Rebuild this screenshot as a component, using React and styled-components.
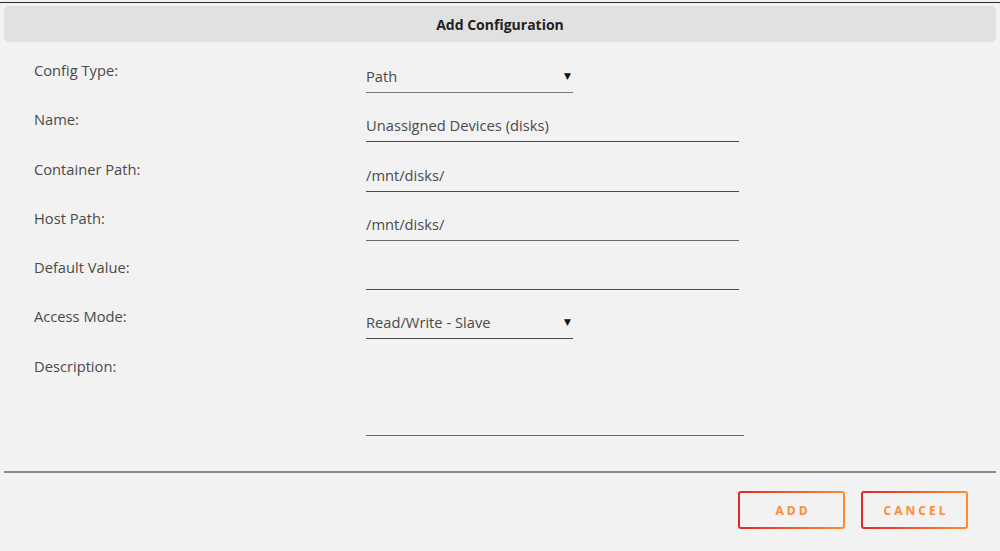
import React from "react";
import styled, { createGlobalStyle } from "styled-components";

const Global = createGlobalStyle`
  html, body { margin: 0; padding: 0; background: #f2f2f2; }
  body { font-family: "Open Sans", "Noto Sans", sans-serif; }
`;

const Dialog = styled.div`
  margin-top: 2px;
  border-top: 1px solid #2b2b2b;
  height: 548px;
  box-sizing: border-box;
  padding: 3px 4px 0 4px;
  display: flex;
  flex-direction: column;
`;

const Header = styled.div`
  height: 36px;
  padding-top: 1px;
  box-sizing: border-box;
  background: #e1e1e1;
  border-radius: 5px;
  display: flex;
  align-items: center;
  justify-content: center;
  font-size: 14px;
  font-weight: 700;
  color: #222;
`;

const Form = styled.div`
  padding: 10px 0 0 30px;
  display: flex;
  flex-direction: column;
`;

const Row = styled.div`
  display: grid;
  grid-template-columns: 332px 1fr;
  height: ${(p) => p.$h || 49.25}px;
  flex: none;
`;

const Label = styled.div`
  padding-top: 9px;
  font-size: 14.7px;
  line-height: 18px;
  color: #4a4a4a;
`;

const Field = styled.div`
  margin-top: 14px;
  width: ${(p) => p.$w}px;
  height: ${(p) => (p.$tall ? 74.5 : 27)}px;
  box-sizing: border-box;
  padding-top: 1px;
  border-bottom: 1px solid ${(p) => p.$line || "#4a4a4a"};
  font-size: 14.7px;
  line-height: 18px;
  color: #4a4a4a;
  display: flex;
  justify-content: space-between;
  align-items: flex-start;
`;

const Arrow = styled.span`
  font-family: "DejaVu Sans", sans-serif;
  font-size: 9px;
  line-height: 18px;
  color: #111;
  margin-right: 2px;
`;

const Divider = styled.div`
  margin-top: 32px;
  height: 2px;
  background: #8a8a8a;
`;

const Footer = styled.div`
  display: flex;
  justify-content: flex-end;
  gap: 16px;
  padding: 18px 28px 0 0;
`;

const Button = styled.button`
  width: 107px;
  height: 38px;
  box-sizing: border-box;
  border: 2px solid transparent;
  border-radius: 3px;
  background: linear-gradient(#f2f2f2, #f2f2f2) padding-box,
    linear-gradient(90deg, #e22828, #ff8c2f) border-box;
  font-family: "Open Sans", "Noto Sans", sans-serif;
  font-size: 12px;
  font-weight: 700;
  letter-spacing: 3px;
  padding: 1px 0 0 3px;
  color: #fb8c3c;
`;

const rows = [
  { label: "Config Type:", value: "Path", w: 207, select: true, line: "#7a7a7a" },
  { label: "Name:", value: "Unassigned Devices (disks)", w: 373 },
  { label: "Container Path:", value: "/mnt/disks/", w: 373 },
  { label: "Host Path:", value: "/mnt/disks/", w: 373, line: "#6a6a6a" },
  { label: "Default Value:", value: "", w: 373 },
  { label: "Access Mode:", value: "Read/Write - Slave", w: 207, select: true },
];

export default function App() {
  return (
    <>
      <Global />
      <Dialog>
        <Header>Add Configuration</Header>
        <Form>
          {rows.map((r) => (
            <Row key={r.label}>
              <Label>{r.label}</Label>
              <Field $w={r.w} $line={r.line}>
                <span>{r.value}</span>
                {r.select && <Arrow>▼</Arrow>}
              </Field>
            </Row>
          ))}
          <Row $h={91.5}>
            <Label>Description:</Label>
            <Field $w={378} $tall $line="#6a6a6a" />
          </Row>
        </Form>
        <Divider />
        <Footer>
          <Button>ADD</Button>
          <Button>CANCEL</Button>
        </Footer>
      </Dialog>
    </>
  );
}
